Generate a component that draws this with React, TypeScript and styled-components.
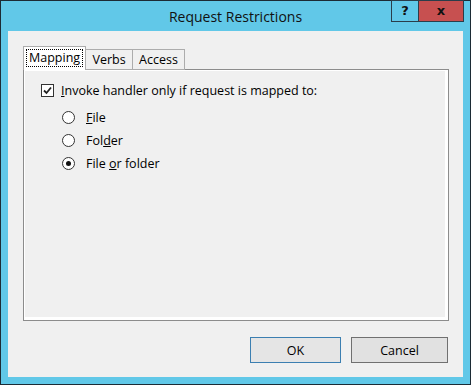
import React from 'react';
import styled, { createGlobalStyle } from 'styled-components';

const GlobalStyle = createGlobalStyle`
  html, body {
    margin: 0;
    padding: 0;
    background: #fff;
  }
  body {
    font-family: "Segoe UI", "Open Sans", sans-serif;
    font-size: 12.5px;
    color: #000;
  }
`;

const StyledWindow = styled.div`
  background-color: #61c8e8;
  border: 1px solid #1c2b35;
  box-sizing: border-box;
  display: flex;
  flex-direction: column;
  height: 385px;
  width: 471px;
`;

const StyledTitleBar = styled.div`
  align-items: start;
  display: grid;
  grid-template-columns: 1fr auto 1fr;
  height: 30px;
`;

const StyledTitle = styled.div`
  align-self: center;
  color: #111;
  font-size: 14px;
  grid-column: 2;
  padding-top: 1px;
`;

const StyledCaptionButtons = styled.div`
  display: flex;
  grid-column: 3;
  justify-self: end;
  margin-right: 6px;
  margin-top: -1px;
`;

const StyledCaptionButton = styled.div<{ $close?: boolean }>`
  align-items: center;
  background-color: ${({ $close }) => ($close ? '#c75050' : 'transparent')};
  border: 1px solid #2a3d4a;
  box-sizing: border-box;
  color: #111;
  display: flex;
  font-family: "DejaVu Sans", sans-serif;
  font-size: 13px;
  font-weight: 700;
  height: 22px;
  justify-content: center;
  margin-left: -1px;
  padding-bottom: 1px;
  width: ${({ $close }) => ($close ? '46px' : '28px')};
`;

const StyledClient = styled.div`
  background-color: #f0f0f0;
  display: flex;
  flex: 1;
  flex-direction: column;
  margin: 0 7px 7px 7px;
  padding: 15px 14px 14px 15px;
`;

const StyledTabStrip = styled.div`
  align-items: flex-end;
  display: flex;
  height: 24px;
  margin-bottom: -1px;
  position: relative;
  z-index: 1;
`;

const StyledTab = styled.div<{ $active?: boolean }>`
  background-color: ${({ $active }) => ($active ? '#fff' : '#f0f0f0')};
  border: 1px solid #acacac;
  border-bottom: ${({ $active }) => ($active ? 'none' : '1px solid #acacac')};
  box-sizing: border-box;
  height: ${({ $active }) => ($active ? '24px' : '21px')};
  margin-left: -1px;
  min-width: 48px;
  padding: ${({ $active }) => ($active ? '2px 2px 0 2px' : '1px 6px 0 6px')};
  text-align: center;

  &:first-child {
    margin-left: 0;
  }
`;

const StyledFocusLabel = styled.span`
  border: 1px dotted #000;
  display: inline-block;
  line-height: 16px;
  padding: 0 2px;
`;

const StyledPanel = styled.div`
  background-color: #f0f0f0;
  border: 1px solid #8c8c8c;
  box-shadow: inset 1px 1px 0 #fff, inset -3px -3px 0 #fff;
  box-sizing: border-box;
  display: flex;
  flex-direction: column;
  gap: 7px;
  height: 252px;
  padding: 12px 17px;
`;

const StyledRow = styled.label<{ $indent?: boolean }>`
  align-items: center;
  display: flex;
  gap: 7px;
  height: 16px;
  margin-bottom: ${({ $indent }) => ($indent ? '0' : '4px')};
  margin-left: ${({ $indent }) => ($indent ? '21px' : '0')};
`;

const StyledBox = styled.span`
  align-items: center;
  background-color: #fff;
  border: 1px solid #333;
  box-sizing: border-box;
  display: inline-flex;
  height: 13px;
  justify-content: center;
  width: 13px;
`;

const StyledRadio = styled.span<{ $checked?: boolean }>`
  align-items: center;
  background-color: #fff;
  border: 1px solid #333;
  border-radius: 50%;
  box-sizing: border-box;
  display: inline-flex;
  height: 13px;
  justify-content: center;
  margin-right: 4px;
  width: 13px;

  &::after {
    background-color: #111;
    border-radius: 50%;
    content: '';
    display: ${({ $checked }) => ($checked ? 'block' : 'none')};
    height: 5px;
    width: 5px;
  }
`;

const StyledKey = styled.span`
  text-decoration: underline;
`;

const StyledFooter = styled.div`
  display: flex;
  gap: 10px;
  justify-content: flex-end;
  margin-top: auto;
  padding-right: 1px;
`;

const StyledButton = styled.div<{ $default?: boolean; $width: number }>`
  align-items: center;
  background-color: ${({ $default }) => ($default ? '#e5e5e5' : '#e1e1e1')};
  border: 1px solid ${({ $default }) => ($default ? '#3c7fb1' : '#707070')};
  box-sizing: border-box;
  display: flex;
  height: 26px;
  justify-content: center;
  width: ${({ $width }) => $width}px;
`;

const CheckMark = () => (
  <svg width="9" height="9" viewBox="0 0 9 9">
    <path d="M1 4.5 L3.5 7 L8 1.5" fill="none" stroke="#222" strokeWidth="1.8" />
  </svg>
);

export default function App() {
  return (
    <>
      <GlobalStyle />
      <StyledWindow>
        <StyledTitleBar>
          <StyledTitle>Request Restrictions</StyledTitle>
          <StyledCaptionButtons>
            <StyledCaptionButton>?</StyledCaptionButton>
            <StyledCaptionButton $close>x</StyledCaptionButton>
          </StyledCaptionButtons>
        </StyledTitleBar>
        <StyledClient>
          <StyledTabStrip>
            <StyledTab $active>
              <StyledFocusLabel>Mapping</StyledFocusLabel>
            </StyledTab>
            <StyledTab>Verbs</StyledTab>
            <StyledTab>Access</StyledTab>
          </StyledTabStrip>
          <StyledPanel>
            <StyledRow>
              <StyledBox>
                <CheckMark />
              </StyledBox>
              <span>
                <StyledKey>I</StyledKey>nvoke handler only if request is mapped to:
              </span>
            </StyledRow>
            <StyledRow $indent>
              <StyledRadio />
              <span>
                <StyledKey>F</StyledKey>ile
              </span>
            </StyledRow>
            <StyledRow $indent>
              <StyledRadio />
              <span>
                Fol<StyledKey>d</StyledKey>er
              </span>
            </StyledRow>
            <StyledRow $indent>
              <StyledRadio $checked />
              <span>
                File <StyledKey>o</StyledKey>r folder
              </span>
            </StyledRow>
          </StyledPanel>
          <StyledFooter>
            <StyledButton $default $width={91}>
              OK
            </StyledButton>
            <StyledButton $width={97}>Cancel</StyledButton>
          </StyledFooter>
        </StyledClient>
      </StyledWindow>
    </>
  );
}
